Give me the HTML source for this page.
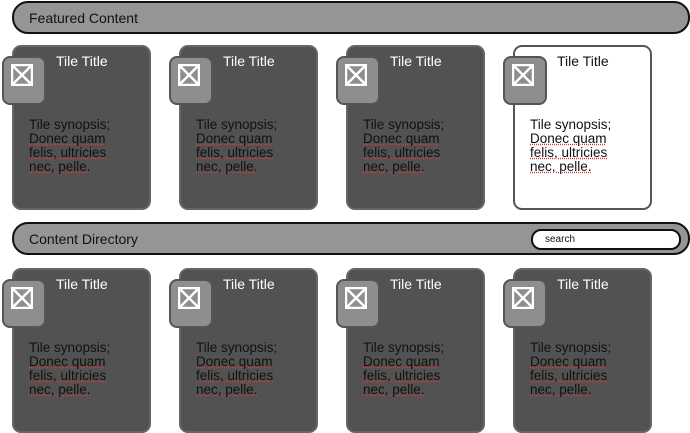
<!DOCTYPE html>
<html><head><meta charset="utf-8"><style>
*{margin:0;padding:0;box-sizing:border-box}
body{width:690px;height:433px;background:#fff;position:relative;overflow:hidden;font-family:"Liberation Sans",sans-serif}
.bar{position:absolute;left:12px;width:678px;height:33px;background:#959595;border:2px solid #111;border-radius:16px}
.bar span{position:absolute;left:15px;top:7px;font-size:14px;color:#111}
.search{position:absolute;left:517px;top:5px;width:150px;height:21px;background:#fff;border:2px solid #111;border-radius:10px;font-size:10px;padding:3px 0 0 12px;color:#111}
.tile{position:absolute;width:139px;height:165px;background:#525252;border:2px solid #666;border-radius:9px}
.tile.w{background:#fff;border-color:#555}
.ic{position:absolute;left:-12px;top:9px;width:44px;height:49px;background:#8e8e8e;border:2px solid #555;border-radius:8px}
.ic svg{position:absolute;left:7px;top:6px}
.tt{position:absolute;left:42px;top:6px;font-size:14px;color:#fff}
.w .tt{color:#111}
.syn{position:absolute;left:15px;top:71px;font-size:13.5px;line-height:14px;color:#111;white-space:nowrap}
.u{text-decoration:underline dotted #d33}
</style></head><body>
<div class="bar" style="top:1px"><span>Featured Content</span></div>
<div class="bar" style="top:222px"><span>Content Directory</span><div class="search">search</div></div>
<div class="tile" style="left:12px;top:45px"><div class="ic"><svg width="22" height="22"><rect x="1" y="1" width="20" height="20" fill="none" stroke="#fff" stroke-width="2.5"/><path d="M1 1L21 21M21 1L1 21" stroke="#fff" stroke-width="2.5"/></svg></div><div class="tt">Tile Title</div><div class="syn">Tile synopsis;<br><span class="u">Donec quam</span><br><span class="u">felis, ultricies</span><br><span class="u">nec, pelle.</span></div></div>
<div class="tile" style="left:179px;top:45px"><div class="ic"><svg width="22" height="22"><rect x="1" y="1" width="20" height="20" fill="none" stroke="#fff" stroke-width="2.5"/><path d="M1 1L21 21M21 1L1 21" stroke="#fff" stroke-width="2.5"/></svg></div><div class="tt">Tile Title</div><div class="syn">Tile synopsis;<br><span class="u">Donec quam</span><br><span class="u">felis, ultricies</span><br><span class="u">nec, pelle.</span></div></div>
<div class="tile" style="left:346px;top:45px"><div class="ic"><svg width="22" height="22"><rect x="1" y="1" width="20" height="20" fill="none" stroke="#fff" stroke-width="2.5"/><path d="M1 1L21 21M21 1L1 21" stroke="#fff" stroke-width="2.5"/></svg></div><div class="tt">Tile Title</div><div class="syn">Tile synopsis;<br><span class="u">Donec quam</span><br><span class="u">felis, ultricies</span><br><span class="u">nec, pelle.</span></div></div>
<div class="tile w" style="left:513px;top:45px"><div class="ic"><svg width="22" height="22"><rect x="1" y="1" width="20" height="20" fill="none" stroke="#fff" stroke-width="2.5"/><path d="M1 1L21 21M21 1L1 21" stroke="#fff" stroke-width="2.5"/></svg></div><div class="tt">Tile Title</div><div class="syn">Tile synopsis;<br><span class="u">Donec quam</span><br><span class="u">felis, ultricies</span><br><span class="u">nec, pelle.</span></div></div>
<div class="tile" style="left:12px;top:268px"><div class="ic"><svg width="22" height="22"><rect x="1" y="1" width="20" height="20" fill="none" stroke="#fff" stroke-width="2.5"/><path d="M1 1L21 21M21 1L1 21" stroke="#fff" stroke-width="2.5"/></svg></div><div class="tt">Tile Title</div><div class="syn">Tile synopsis;<br><span class="u">Donec quam</span><br><span class="u">felis, ultricies</span><br><span class="u">nec, pelle.</span></div></div>
<div class="tile" style="left:179px;top:268px"><div class="ic"><svg width="22" height="22"><rect x="1" y="1" width="20" height="20" fill="none" stroke="#fff" stroke-width="2.5"/><path d="M1 1L21 21M21 1L1 21" stroke="#fff" stroke-width="2.5"/></svg></div><div class="tt">Tile Title</div><div class="syn">Tile synopsis;<br><span class="u">Donec quam</span><br><span class="u">felis, ultricies</span><br><span class="u">nec, pelle.</span></div></div>
<div class="tile" style="left:346px;top:268px"><div class="ic"><svg width="22" height="22"><rect x="1" y="1" width="20" height="20" fill="none" stroke="#fff" stroke-width="2.5"/><path d="M1 1L21 21M21 1L1 21" stroke="#fff" stroke-width="2.5"/></svg></div><div class="tt">Tile Title</div><div class="syn">Tile synopsis;<br><span class="u">Donec quam</span><br><span class="u">felis, ultricies</span><br><span class="u">nec, pelle.</span></div></div>
<div class="tile" style="left:513px;top:268px"><div class="ic"><svg width="22" height="22"><rect x="1" y="1" width="20" height="20" fill="none" stroke="#fff" stroke-width="2.5"/><path d="M1 1L21 21M21 1L1 21" stroke="#fff" stroke-width="2.5"/></svg></div><div class="tt">Tile Title</div><div class="syn">Tile synopsis;<br><span class="u">Donec quam</span><br><span class="u">felis, ultricies</span><br><span class="u">nec, pelle.</span></div></div>
</body></html>
